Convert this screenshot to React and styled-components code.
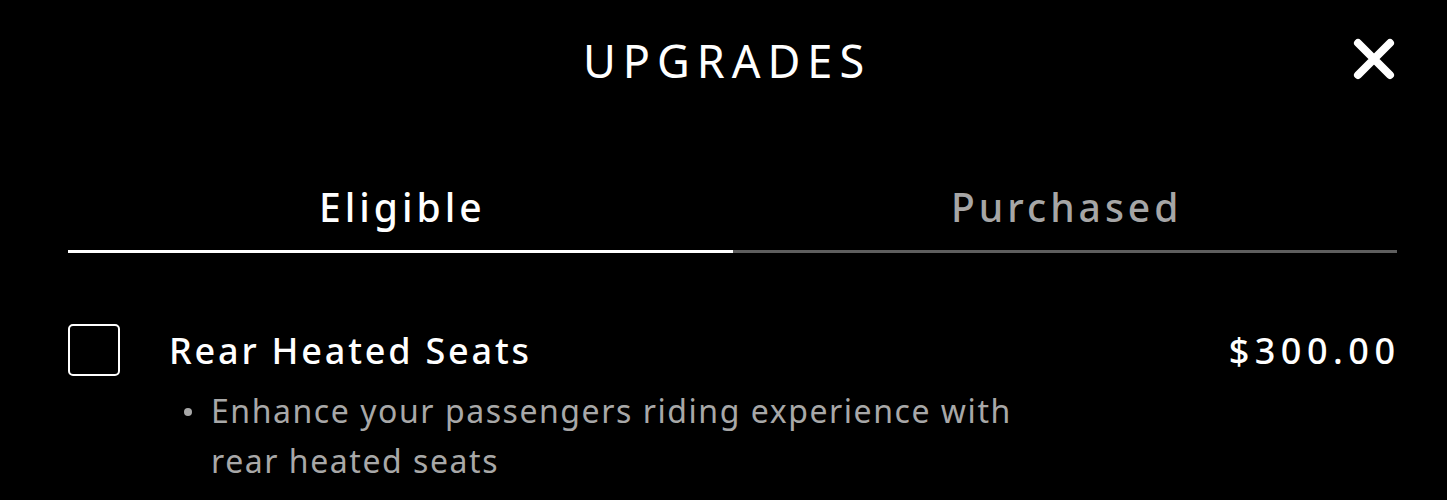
import React, { useState } from 'react'
import styled, { createGlobalStyle } from 'styled-components'

const GlobalStyle = createGlobalStyle`
  html, body {
    margin: 0;
    padding: 0;
    background: #000;
  }
  body {
    font-family: 'Noto Sans', 'Open Sans', sans-serif;
    color: #fff;
  }
`

const Page = styled.div`
  width: 1447px;
  min-height: 500px;
  background: #000;
`

const Header = styled.header`
  position: relative;
  height: 120px;
  padding-bottom: 6px;
  display: flex;
  align-items: center;
  justify-content: center;
`

const Title = styled.h1`
  margin: 0 -7px 0 0;
  font-size: 45px;
  font-weight: 400;
  letter-spacing: 7px;
  line-height: 1;
`

const CloseButton = styled.button`
  position: absolute;
  right: 50px;
  top: 36px;
  width: 46px;
  height: 46px;
  padding: 0;
  border: 0;
  background: transparent;
  cursor: pointer;
  display: flex;
  align-items: center;
  justify-content: center;
`

const Content = styled.main`
  width: 1329px;
  margin-left: 68px;
`

const Tabs = styled.div`
  display: flex;
  margin-top: 27px;
`

const Tab = styled.button`
  flex: 1;
  height: 100px;
  padding: 0 0 14px;
  display: flex;
  align-items: flex-end;
  justify-content: center;
  background: transparent;
  border: 0;
  border-bottom: 3px solid ${props => (props.active ? '#fff' : '#5e5e5e')};
  color: ${props => (props.active ? '#fff' : '#a6a6a6')};
  font-family: 'Noto Sans', 'Open Sans', sans-serif;
  font-size: 39px;
  font-weight: 500;
  letter-spacing: 4px;
  text-indent: 4px;
  line-height: 1.5;
  cursor: pointer;
`

const Item = styled.div`
  display: grid;
  grid-template-columns: 52px 1fr auto;
  column-gap: 49px;
  align-items: center;
  margin-top: 71px;
`

const Checkbox = styled.span`
  width: 52px;
  height: 52px;
  box-sizing: border-box;
  border: 2px solid #fff;
  border-radius: 5px;
  display: block;
`

const ItemName = styled.div`
  font-size: 36px;
  font-weight: 500;
  letter-spacing: 2.8px;
`

const Price = styled.div`
  font-size: 36px;
  font-weight: 500;
  letter-spacing: 5.5px;
  margin-right: -3.5px;
`

const Details = styled.ul`
  margin: 10px 0 0;
  padding: 0 0 0 115px;
  width: 960px;
  box-sizing: border-box;
  list-style: none;
`

const Detail = styled.li`
  position: relative;
  padding-left: 28px;
  font-size: 32px;
  line-height: 50px;
  color: #a8a8a8;
  letter-spacing: 1.55px;

  &::before {
    content: '';
    position: absolute;
    left: 1px;
    top: 22px;
    width: 8px;
    height: 8px;
    border-radius: 50%;
    background: #a8a8a8;
  }
`

export default function App() {
  const [tab, setTab] = useState('eligible')

  return (
    <Page>
      <GlobalStyle />
      <Header>
        <Title>UPGRADES</Title>
        <CloseButton aria-label="Close">
          <svg width="42" height="42" viewBox="0 0 42 42">
            <path
              d="M5 5 L37 37 M37 5 L5 37"
              stroke="#fff"
              strokeWidth="8"
              strokeLinecap="round"
              fill="none"
            />
          </svg>
        </CloseButton>
      </Header>
      <Content>
        <Tabs>
          <Tab active={tab === 'eligible'} onClick={() => setTab('eligible')}>
            Eligible
          </Tab>
          <Tab active={tab === 'purchased'} onClick={() => setTab('purchased')}>
            Purchased
          </Tab>
        </Tabs>
        <Item>
          <Checkbox />
          <ItemName>Rear Heated Seats</ItemName>
          <Price>$300.00</Price>
        </Item>
        <Details>
          <Detail>Enhance your passengers riding experience with rear heated seats</Detail>
        </Details>
      </Content>
    </Page>
  )
}
